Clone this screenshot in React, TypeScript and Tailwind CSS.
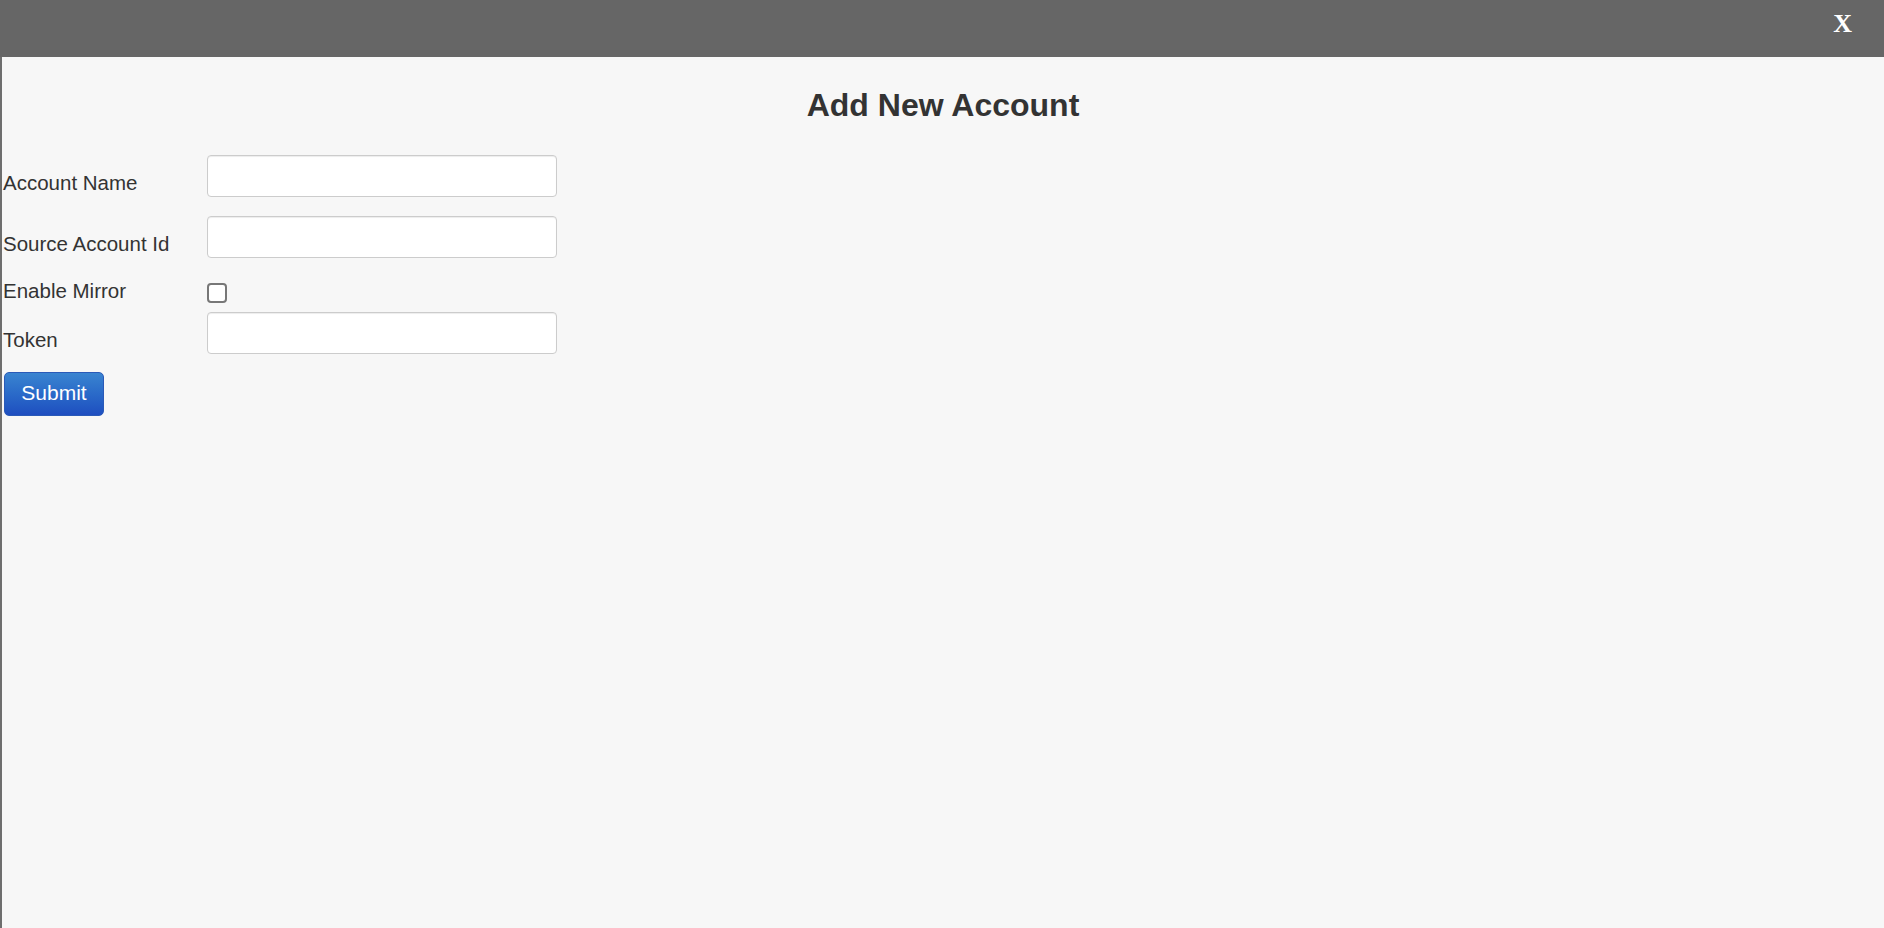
import React from "react";

const fields = [
  { label: "Account Name", type: "text" },
  { label: "Source Account Id", type: "text" },
  { label: "Enable Mirror", type: "checkbox" },
  { label: "Token", type: "text" },
];

const App = () => {
  return (
    <div className="w-full h-[928px] bg-[#f7f7f7] border-l-2 border-[#6e6e6e] flex flex-col font-['Liberation_Sans',Arial,sans-serif] text-[#333]">
      {/* header bar */}
      <div className="h-[57px] bg-[#666] flex items-start justify-end pr-[32px] -ml-[2px]">
        <span className="font-['Liberation_Serif',serif] font-bold text-white text-[26px] leading-none mt-[11px]">
          X
        </span>
      </div>

      <h3 className="mt-[32px] text-center font-bold text-[32px] leading-none">
        Add New Account
      </h3>

      <form className="flex flex-col mt-[34px]">
        {fields.map((f, i) =>
          f.type === "checkbox" ? (
            <div key={i} className="flex items-end h-[20px] mt-[25px]">
              <label className="w-[205px] pl-[1px] text-[20.5px] leading-none pb-[2px]">
                {f.label}
              </label>
              <span className="w-[20px] h-[20px] rounded-[4px] border-2 border-[#777] bg-white" />
            </div>
          ) : (
            <div
              key={i}
              className={`flex items-end ${i === 0 ? "" : i === 3 ? "mt-[9px]" : "mt-[19px]"}`}
            >
              <label className="w-[205px] pl-[1px] text-[20.5px] leading-none pb-[4px]">
                {f.label}
              </label>
              <input
                type="text"
                className="w-[350px] h-[42px] bg-white border border-[#ccc] rounded-[4px] shadow-[inset_0_1px_1px_rgba(0,0,0,0.075)] outline-none"
              />
            </div>
          )
        )}
        <div className="mt-[18px] pl-[2px]">
          <button
            type="button"
            className="w-[100px] h-[44px] pb-[3px] rounded-[5px] border border-[#2a5ab8] bg-gradient-to-b from-[#3a84d0] to-[#1f4ec0] text-white text-[21px] leading-none"
          >
            Submit
          </button>
        </div>
      </form>
    </div>
  );
};

export default App;
